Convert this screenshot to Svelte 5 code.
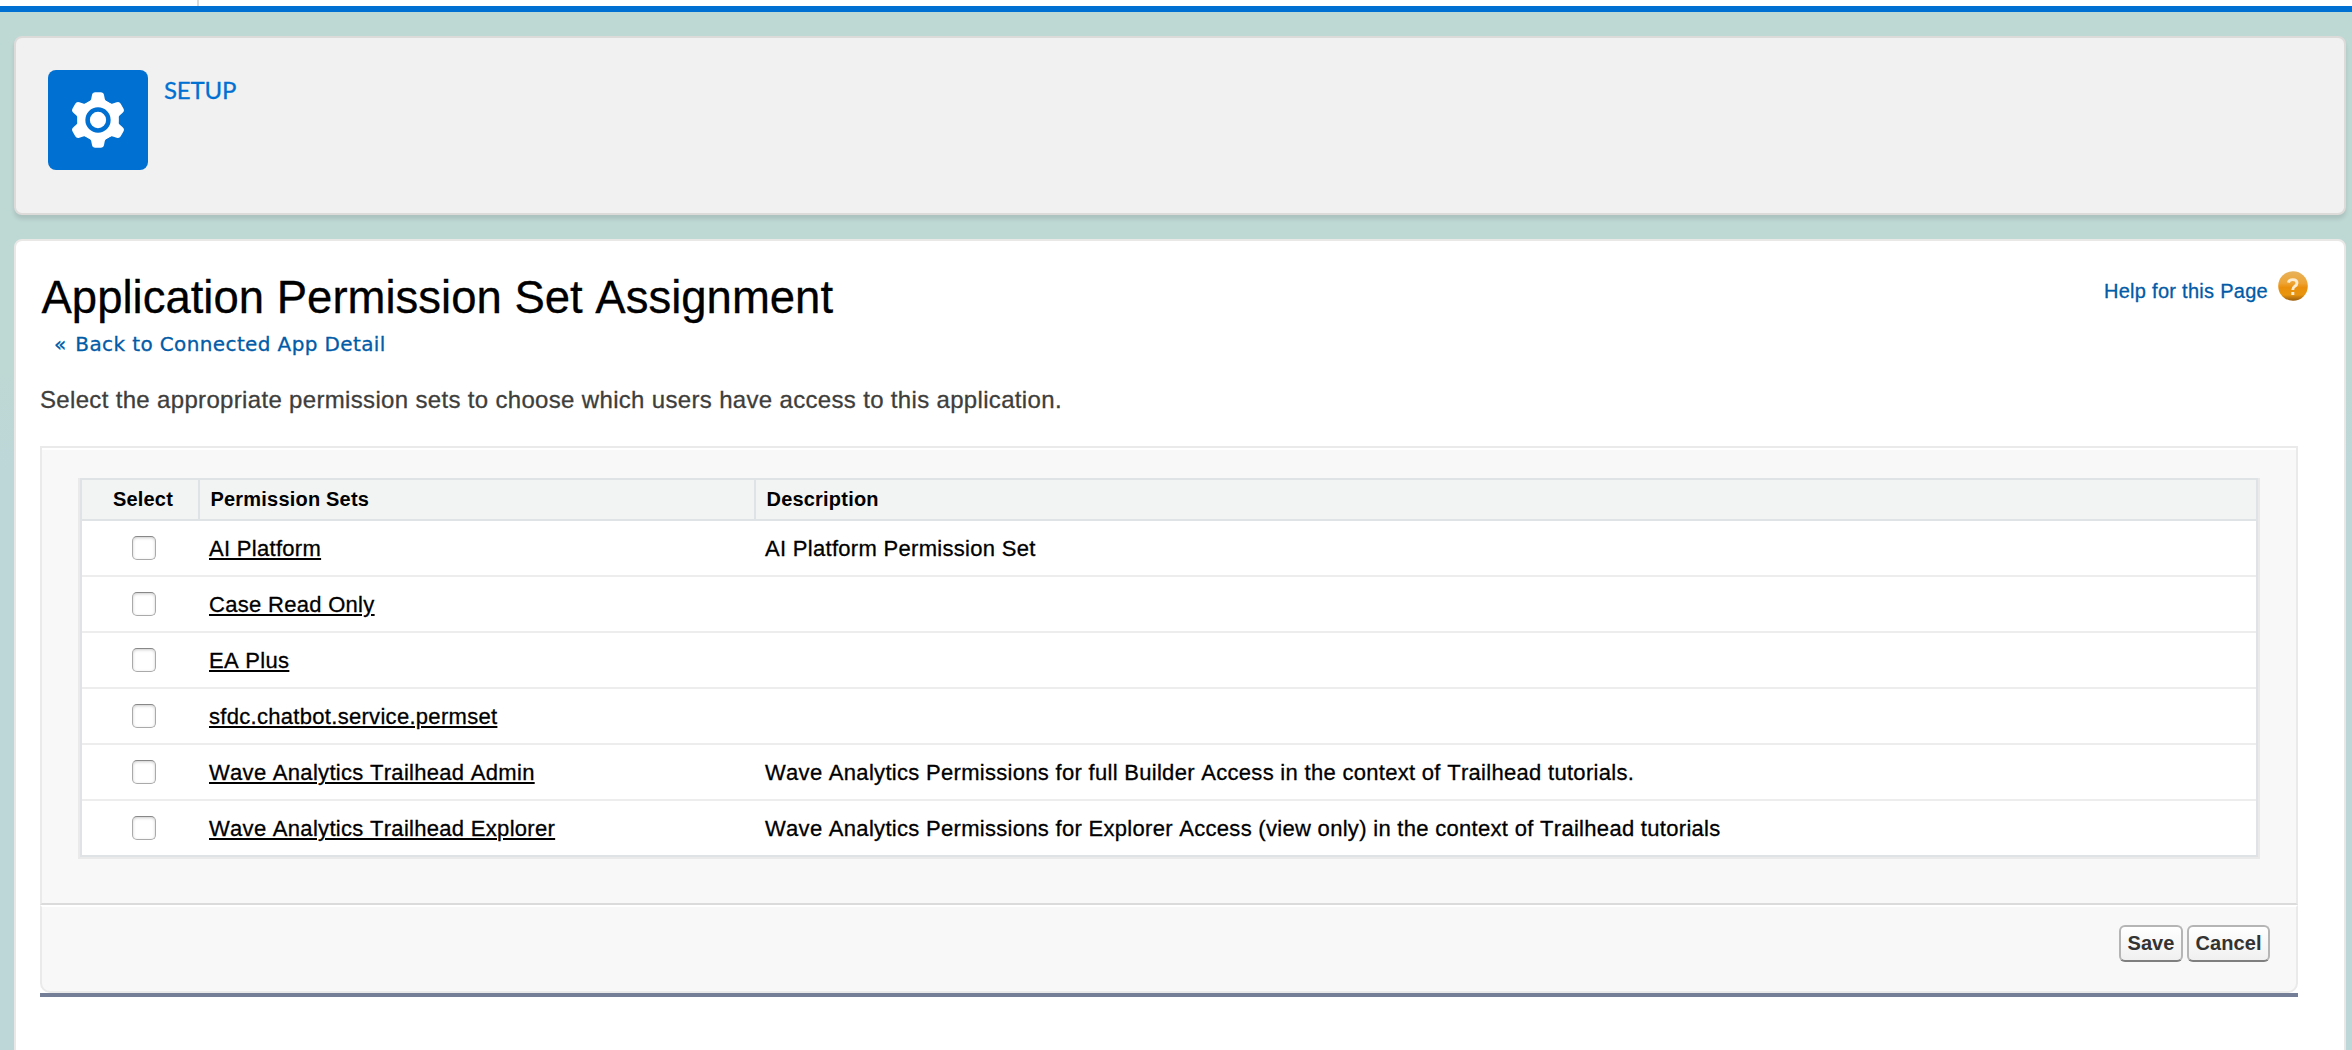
<script>
  const rows = [
    { name: 'AI Platform', description: 'AI Platform Permission Set' },
    { name: 'Case Read Only', description: '' },
    { name: 'EA Plus', description: '' },
    { name: 'sfdc.chatbot.service.permset', description: '' },
    { name: 'Wave Analytics Trailhead Admin', description: 'Wave Analytics Permissions for full Builder Access in the context of Trailhead tutorials.' },
    { name: 'Wave Analytics Trailhead Explorer', description: 'Wave Analytics Permissions for Explorer Access (view only) in the context of Trailhead tutorials' }
  ];
</script>

<div class="page">
  <div class="topbar"><span class="tab"></span></div>
  <header class="setup">
    <div class="tile">
      <svg viewBox="0 0 100 100" width="100" height="100" aria-hidden="true">
        <g fill="#fff">
          <circle cx="50" cy="50" r="20.8" />
          {#each [0, 60, 120, 180, 240, 300] as angle}
            <path transform="rotate({angle} 50 50)" d="M37.5 33.5 Q42.6 31.8 43.2 29 L44 25 Q44.5 22.2 47.3 22.2 H52.7 Q55.5 22.2 56 25 L56.8 29 Q57.4 31.8 62.5 33.5 L56 42 H44 Z" />
          {/each}
        </g>
        <circle cx="50" cy="50" r="10.4" fill="#fff" stroke="#0070d2" stroke-width="4.5" />
      </svg>
    </div>
    <span class="label">SETUP</span>
  </header>

  <main class="card">
    <div class="heading">
      <h1>Application Permission Set Assignment</h1>
      <a class="help" href="#help">
        <span>Help for this Page</span>
        <svg viewBox="0 0 30 30" width="30" height="30" aria-hidden="true">
          <defs>
            <linearGradient id="orb" x1="0" y1="0" x2="0" y2="1">
              <stop offset="0" stop-color="#e8b25c" />
              <stop offset=".4" stop-color="#eea435" />
              <stop offset=".55" stop-color="#ea8f0c" />
              <stop offset=".8" stop-color="#e8950f" />
              <stop offset="1" stop-color="#9a5c0c" />
            </linearGradient>
          </defs>
          <circle cx="15" cy="15" r="14.8" fill="url(#orb)" />
          <path d="M10.4 11.6 Q11 8.6 14.8 8.6 Q19 8.6 19 12 Q19 14 16.6 15.4 Q14.8 16.6 14.8 19" fill="none" stroke="#fdeccf" stroke-width="2.9" />
          <rect x="13.3" y="21" width="3" height="3" fill="#fdeccf" />
        </svg>
      </a>
    </div>
    <a class="back" href="#back"><span class="mark">«</span> Back to Connected App Detail</a>
    <p class="intro">Select the appropriate permission sets to choose which users have access to this application.</p>

    <section class="panel">
      <div class="body">
        <div class="table">
          <div class="row head">
            <span class="select">Select</span>
            <span class="name">Permission Sets</span>
            <span class="desc">Description</span>
          </div>
          {#each rows as row}
            <div class="row">
              <span class="select"><input type="checkbox" aria-label={row.name} /></span>
              <span class="name"><a href="#set">{row.name}</a></span>
              <span class="desc">{row.description}</span>
            </div>
          {/each}
        </div>
      </div>
      <div class="actions">
        <button class="save">Save</button>
        <button class="cancel">Cancel</button>
      </div>
    </section>
  </main>
</div>

<style>
  :global(body) { overflow: hidden; }
  .page, .page * { box-sizing: border-box; }
  .page {
    height: 1050px;
    display: flex;
    flex-direction: column;
    overflow: hidden;
    background: linear-gradient(#bed8d4, #bed8d4 35%, #bdd7d9 45%);
    font-family: 'Liberation Sans', Arial, sans-serif;
    font-kerning: none;
    color: #000;
    -webkit-text-stroke: .3px;
  }
  .topbar { flex: none; height: 12px; background: #fff; border-bottom: 6px solid #0070d2; }
  .tab { display: block; width: 199px; height: 6px; border-right: 2px solid #dddbda; }
  .setup {
    flex: none;
    display: flex;
    gap: 16px;
    height: 179px;
    margin: 24px 6px 0 14px;
    padding: 32px;
    background: #f1f1f1;
    border: 2px solid #dddbda;
    border-radius: 8px;
    box-shadow: 0 4px 4px rgba(0, 0, 0, .1);
  }
  .tile { width: 100px; height: 100px; border-radius: 8px; background: #0070d2; }
  .tile svg { display: block; }
  .label { padding-top: 6px; font: 24px/28px Lato, sans-serif; font-kerning: normal; letter-spacing: -.2px; color: #0070d2; }
  .card {
    flex: none;
    height: 900px;
    margin: 24px 6px 0 14px;
    padding: 31px 46px 0 24px;
    background: #fff;
    border: 2px solid #e9e8e7;
    border-radius: 8px;
  }
  .heading { display: flex; justify-content: space-between; height: 57px; }
  h1 { margin: 0; padding-left: 1.5px; font-size: 45.5px; line-height: 52px; font-weight: 400; white-space: nowrap; }
  .help { display: flex; gap: 10px; margin: -1px -10px 0 0; font-size: 20px; line-height: 40px; letter-spacing: .28px; color: #015ba7; text-decoration: none; }
  .back { display: block; height: 30px; padding-left: 14px; font: 20px/30px 'DejaVu Sans', Verdana, sans-serif; letter-spacing: .38px; color: #015ba7; text-decoration: none; }
  .mark { margin-right: 2px; }
  .intro { margin: 27px 0 0; font-size: 24px; line-height: 28px; letter-spacing: .33px; color: #3e3e3c; }
  .panel { margin-top: 32px; height: 551px; border-bottom: 4px solid #747e96; }
  .body { height: 459px; padding: 30px 36px 0; background: #f8f8f8; border: 2px solid #eaeaea; border-bottom: 2px solid #dbdbdb; box-shadow: inset 0 2px #fff; }
  .table { background: #fff; border: 2px solid #eaeaea; border-top: 0; }
  .row { display: grid; grid-template-columns: 118px 556px 1fr; height: 56px; border: solid #e0e3e5; border-width: 0 2px; font-size: 22px; line-height: 55px; letter-spacing: .3px; background: linear-gradient(#ededed, #ededed) bottom / 100% 2px no-repeat; }
  .row:last-child { border-bottom: 2px solid #e0e3e5; background: none; }
  .head { height: 43px; background: #f2f3f3; border-width: 2px; font-size: 20px; font-weight: 700; line-height: 38px; letter-spacing: .2px; -webkit-text-stroke: 0; }
  .head .name { border: solid #e0e3e5; border-width: 0 2px; margin-left: -2px; }
  .row .name, .row .desc { padding-left: 9px; }
  .head .name, .head .desc { padding-left: 10.5px; }
  .select { display: flex; justify-content: center; padding-left: 4px; }
  .name a { color: #000; text-underline-offset: 2px; text-decoration-thickness: 2px; }
  input { appearance: none; width: 24px; height: 24px; margin: 15px 0 0 2px; border: 1px solid #aaa; border-top-color: #888; border-radius: 5px; background: #fff; box-shadow: inset 0 1px 3px #ccc; }
  .actions { height: 88px; padding: 18px 26px 0; display: flex; justify-content: flex-end; gap: 4px; background: #f8f8f8; border: 2px solid #eaeaea; border-top-color: #fff; border-radius: 0 0 10px 10px; }
  button { height: 37px; padding: 0 0 1px; border: 2px solid #b5b5b5; border-bottom-color: #7f7f7f; border-radius: 6px; background: linear-gradient(#fff, #f0f0f0); font: 700 20px/32px 'Liberation Sans', Arial, sans-serif; letter-spacing: .1px; color: #333; -webkit-text-stroke: 0; }
  .save { width: 64px; }
  .cancel { width: 83px; }
</style>
